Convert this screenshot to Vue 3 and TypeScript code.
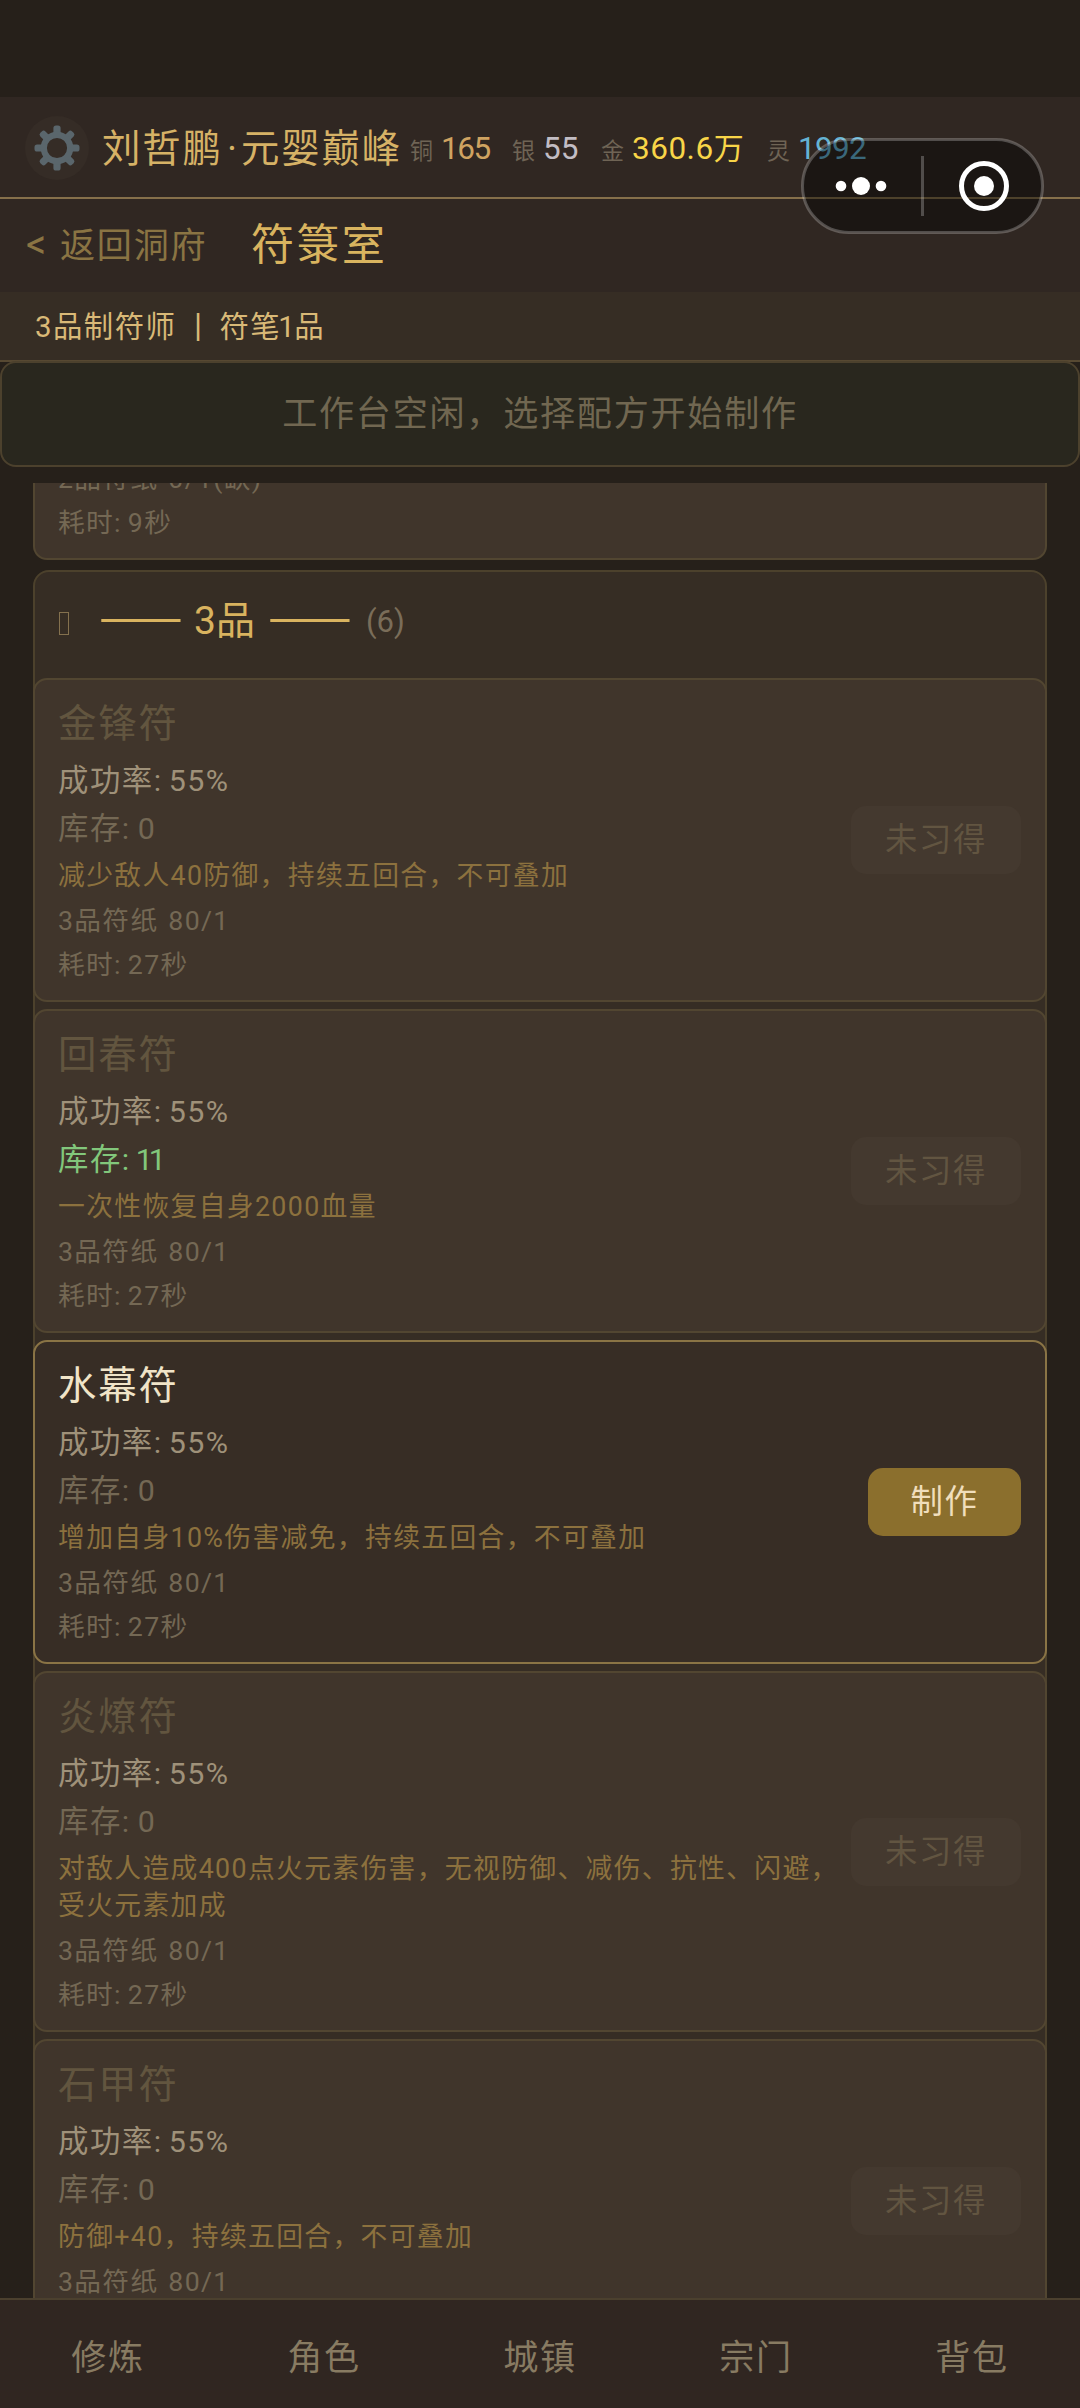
<script setup lang="ts">
interface Currency {
  label: string
  value: string
  unit?: string
  tone: string
}

interface Recipe {
  name: string
  rate: string
  stock: number
  effect: string
  paper: string
  seconds: number
  learned: boolean
}

const currencies: Currency[] = [
  { label: '铜', value: '165', tone: 'copper' },
  { label: '银', value: '55', tone: 'silver' },
  { label: '金', value: '360.6', unit: '万', tone: 'gold' },
  { label: '灵', value: '1992', tone: 'spirit' },
]

const recipes: Recipe[] = [
  { name: '金锋符', rate: '55%', stock: 0, effect: '减少敌人40防御，持续五回合，不可叠加', paper: '80/1', seconds: 27, learned: false },
  { name: '回春符', rate: '55%', stock: 11, effect: '一次性恢复自身2000血量', paper: '80/1', seconds: 27, learned: false },
  { name: '水幕符', rate: '55%', stock: 0, effect: '增加自身10%伤害减免，持续五回合，不可叠加', paper: '80/1', seconds: 27, learned: true },
  { name: '炎燎符', rate: '55%', stock: 0, effect: '对敌人造成400点火元素伤害，无视防御、减伤、抗性、闪避，\n受火元素加成', paper: '80/1', seconds: 27, learned: false },
  { name: '石甲符', rate: '55%', stock: 0, effect: '防御+40，持续五回合，不可叠加', paper: '80/1', seconds: 27, learned: false },
]

const tabs: string[] = ['修炼', '角色', '城镇', '宗门', '背包']
const teeth: number[] = [0, 45, 90, 135, 180, 225, 270, 315]
</script>

<template>
  <div class="app">
    <header class="topbar">
      <div class="gear">
        <svg width="64" height="64" viewBox="-32 -32 64 64">
          <rect v-for="a in teeth" :key="a" x="-3.6" y="-22.5" width="7.2" height="12" rx="2.6" fill="#5a666c" :transform="`rotate(${a})`" />
          <circle r="13.2" fill="none" stroke="#5a666c" stroke-width="6.2" />
        </svg>
      </div>
      <div class="player">刘哲鹏<span class="dot">·</span>元婴巅峰</div>
      <div class="purse">
        <div v-for="c in currencies" :key="c.label" class="coin" :class="c.tone">
          <span class="coin-label">{{ c.label }}</span>
          <span class="coin-value">{{ c.value }}<span v-if="c.unit" class="unit">{{ c.unit }}</span></span>
        </div>
      </div>
      <div class="capsule">
        <svg width="243" height="96" viewBox="0 0 243 96">
          <rect x="1.5" y="1.5" width="240" height="93" rx="46.5" fill="#000" fill-opacity=".42" stroke="#fff" stroke-opacity=".24" stroke-width="3" />
          <circle cx="40" cy="48" r="5.3" fill="#fff" />
          <circle cx="60" cy="48" r="9" fill="#fff" />
          <circle cx="80" cy="48" r="5.3" fill="#fff" />
          <rect x="120" y="18" width="3" height="60" fill="#fff" fill-opacity=".24" />
          <circle cx="183" cy="48" r="22.5" fill="none" stroke="#fff" stroke-width="5" />
          <circle cx="183" cy="48" r="10" fill="#fff" />
        </svg>
      </div>
    </header>

    <div class="titlebar">
      <span class="back"><span class="lt">&lt;</span>返回洞府</span>
      <span class="title">符箓室</span>
    </div>

    <div class="info">3品制符师<span class="bar">|</span>符笔<span class="one">1</span>品</div>

    <div class="bench">工作台空闲，选择配方开始制作</div>

    <main class="list">
      <section class="card clipped">
        <p class="paper">2品符纸 0/1(缺)</p>
        <p class="time">耗时: 9秒</p>
      </section>

      <section class="tier">
        <div class="tier-head">
          <i class="glyph"></i>
          <span class="tier-name"><span class="dash">——</span><span class="grade">3品</span><span class="dash">——</span></span>
          <span class="count">(6)</span>
        </div>
        <article v-for="r in recipes" :key="r.name" class="card" :class="{ learned: r.learned }">
          <div class="body">
            <h3 class="name">{{ r.name }}</h3>
            <p class="rate">成功率: {{ r.rate }}</p>
            <p class="stock" :class="{ has: r.stock > 0 }">库存: <span class="qty">{{ r.stock }}</span></p>
            <p class="effect">{{ r.effect }}</p>
            <p class="paper">3品符纸 {{ r.paper }}</p>
            <p class="time">耗时: {{ r.seconds }}秒</p>
          </div>
          <button class="craft">{{ r.learned ? '制作' : '未习得' }}</button>
        </article>
      </section>
    </main>

    <nav class="tabs">
      <span v-for="t in tabs" :key="t" class="tab">{{ t }}</span>
    </nav>
  </div>
</template>

<style>
html,
body {
  margin: 0;
  background: #26201a;
}
</style>

<style scoped>
.app {
  width: 1080px;
  height: 2408px;
  box-sizing: border-box;
  padding-top: 97px;
  display: flex;
  flex-direction: column;
  overflow: hidden;
  background: #26201a;
  font-family: Roboto, 'Noto Sans CJK SC', sans-serif;
  white-space: nowrap;
}
p,
h3 {
  margin: 0;
  font-weight: 400;
}
.player,
.back,
.title,
.info,
.bench,
.name,
.rate,
.stock,
.effect,
.paper,
.time,
.tab {
  letter-spacing: 0.05em;
}
.topbar {
  position: relative;
  height: 102px;
  flex: none;
  box-sizing: border-box;
  border-bottom: 2px solid #86704b;
  background: #302722;
  display: flex;
  align-items: center;
  padding-left: 25px;
}
.gear {
  width: 64px;
  height: 64px;
  border-radius: 50%;
  background: #352c26;
  margin-top: 2px;
}
.gear svg {
  display: block;
}
.player {
  width: 307px;
  margin-left: 13px;
  margin-right: 1px;
  margin-top: 4px;
  font-size: 38.4px;
  line-height: 50px;
  color: #d6b266;
}
.dot {
  display: inline-block;
  width: 18px;
  text-align: center;
  letter-spacing: 0;
}
.purse {
  display: flex;
  margin-top: 6px;
}
.coin {
  display: flex;
  align-items: baseline;
  line-height: 44px;
}
.coin-label {
  width: 31px;
  font-size: 23px;
  color: #6f6455;
}
.coin-value {
  font-size: 31.5px;
}
.unit {
  font-size: 30px;
}
.copper { width: 102px; }
.silver { width: 89px; }
.gold { width: 166px; }
.copper .coin-value { color: #cfa361; letter-spacing: -1.4px; }
.silver .coin-value { color: #c2bdc4; }
.gold .coin-value { color: #f8d548; letter-spacing: 0.5px; }
.spirit .coin-value { color: #64b3d4; letter-spacing: -0.7px; }
.capsule {
  position: absolute;
  left: 801px;
  top: 41px;
}
.capsule svg {
  display: block;
}
.titlebar {
  height: 93px;
  flex: none;
  background: #302722;
  display: flex;
  align-items: center;
}
.back {
  width: 225px;
  padding-left: 26px;
  font-size: 35.1px;
  line-height: 50px;
  color: #8a7443;
}
.lt {
  display: inline-block;
  width: 34px;
  font-size: 40px;
  line-height: 40px;
  letter-spacing: 0;
}
.title {
  font-size: 43.2px;
  line-height: 60px;
  color: #d9b45f;
}
.info {
  height: 70px;
  flex: none;
  box-sizing: border-box;
  padding-left: 35px;
  border-bottom: 2px solid #574932;
  background: #362d24;
  color: #d9b977;
  font-size: 29.4px;
  line-height: 70px;
}
.bar {
  display: inline-block;
  width: 43px;
  text-align: center;
  letter-spacing: 0;
  font-size: 33px;
  line-height: 40px;
}
.one {
  margin-left: -3px;
  letter-spacing: -0.5px;
}
.bench {
  height: 106px;
  margin-top: -1px;
  flex: none;
  box-sizing: border-box;
  border: 2px solid #4c412d;
  border-radius: 16px;
  background: #29271e;
  color: #716751;
  font-size: 35.1px;
  line-height: 103px;
  text-align: center;
}
.list {
  margin-top: 16px;
  padding: 0 33px;
  flex: 1;
  min-height: 0;
  overflow: hidden;
}
.card {
  box-sizing: border-box;
  border: 2px solid #524631;
  border-radius: 14px;
  background: #40352b;
  display: flex;
  align-items: center;
  justify-content: space-between;
  padding: 19px 24px 15px 23px;
}
.card.clipped {
  height: 77px;
  border-top: 0;
  border-radius: 0 0 14px 14px;
  flex-direction: column;
  align-items: flex-start;
  justify-content: flex-end;
  overflow: hidden;
  margin-bottom: 10px;
}
.tier {
  border: 2px solid #4c412c;
  border-radius: 16px;
  background: #362d24;
}
.tier-head {
  height: 106px;
  box-sizing: border-box;
  padding: 0 0 8px 24px;
  display: flex;
  align-items: center;
}
.glyph {
  width: 8px;
  height: 21px;
  margin-top: 4px;
  border: 1px solid #84714e;
}
.tier-name {
  display: flex;
  align-items: center;
  margin-left: 30px;
  color: #d9b35f;
}
.dash {
  font-family: 'Noto Sans CJK SC', sans-serif;
  font-size: 50px;
  width: 81px;
  line-height: 50px;
  margin-bottom: 17px;
}
.grade {
  width: 88px;
  box-sizing: border-box;
  padding-left: 14px;
  font-size: 39px;
  line-height: 50px;
}
.count {
  margin-left: 17px;
  font-size: 31px;
  color: #7a6d59;
}
.tier .card {
  margin: 0 -2px 7px;
}
.card.learned {
  background: #372d25;
  border-color: #8a7445;
}
.name {
  font-size: 38.4px;
  line-height: 50px;
  color: #62553f;
}
.learned .name {
  color: #f0e4c8;
}
.rate {
  margin-top: 8px;
  font-size: 30.4px;
  line-height: 48px;
  word-spacing: -3px;
  color: #9f9179;
}
.stock {
  font-size: 30.4px;
  line-height: 48px;
  word-spacing: -2px;
  color: #746854;
}
.stock.has {
  color: #82c77b;
}
.has .qty {
  margin-left: -2px;
  letter-spacing: -4px;
}
.effect {
  margin-top: 5px;
  font-size: 26.8px;
  line-height: 37px;
  white-space: pre;
  color: #8c713e;
}
.paper {
  margin-top: 6px;
  font-size: 26.7px;
  line-height: 40px;
  word-spacing: 2px;
  color: #746854;
}
.time {
  margin-top: 4px;
  font-size: 26.7px;
  line-height: 40px;
  word-spacing: -2px;
  color: #746854;
}
.craft {
  flex: none;
  width: 170px;
  height: 68px;
  margin-bottom: 4px;
  padding: 0;
  border: 0;
  border-radius: 15px;
  background: #44392f;
  color: #625541;
  font: inherit;
  font-size: 32.4px;
  line-height: 69px;
  letter-spacing: 0.05em;
}
.learned .craft {
  width: 153px;
  background: #8b6f2d;
  color: #f0debc;
}
.tabs {
  height: 110px;
  flex: none;
  box-sizing: border-box;
  border-top: 2px solid #4b402e;
  background: #302621;
  display: flex;
}
.tab {
  flex: 1;
  text-align: center;
  font-size: 35.1px;
  line-height: 117px;
  color: #887b62;
}
</style>
